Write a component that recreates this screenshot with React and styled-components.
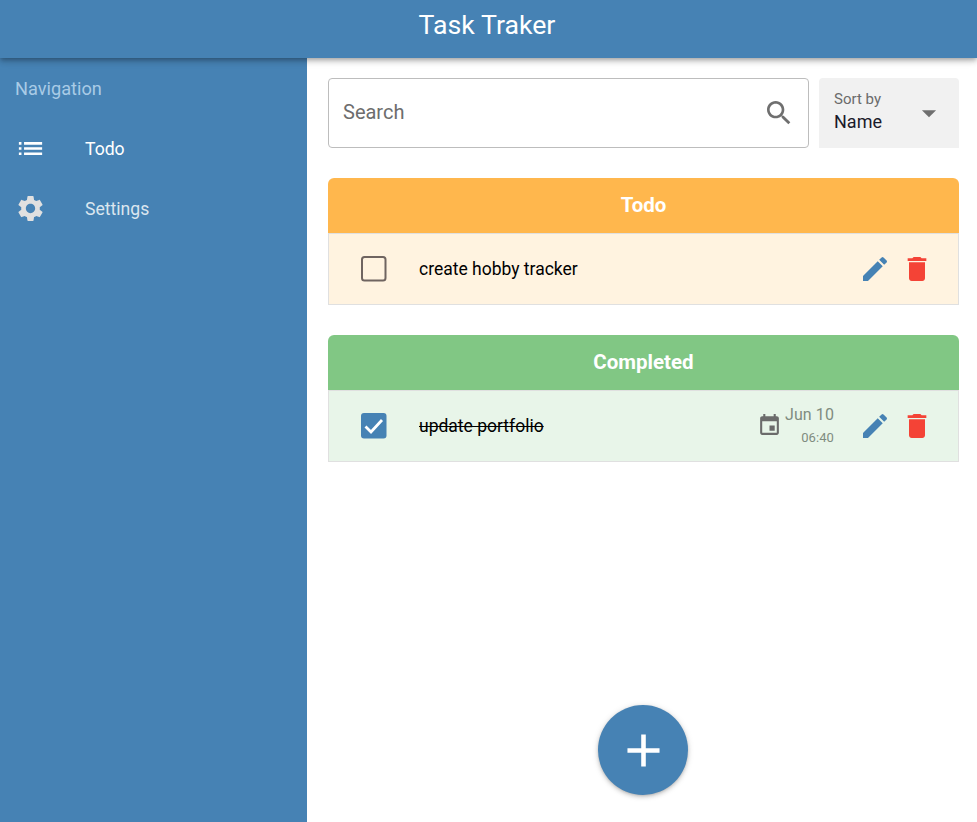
import React from "react";
import styled, { createGlobalStyle } from "styled-components";

const Global = createGlobalStyle`
  html, body { margin: 0; padding: 0; background: #fff; }
  body { font-family: Roboto, "Liberation Sans", sans-serif; }
  * { box-sizing: border-box; }
`;

const Page = styled.div`
  width: 977px;
  height: 822px;
  display: flex;
  flex-direction: column;
  overflow: hidden;
`;
const Header = styled.header`
  height: 58px;
  flex: none;
  background: #4682b4;
  color: #fff;
  font-size: 26.7px;
  line-height: 50px;
  text-align: center;
  padding-right: 3px;
  position: relative;
  z-index: 2;
  box-shadow: 0 2px 4px -1px rgba(0,0,0,.2), 0 4px 5px 0 rgba(0,0,0,.14), 0 1px 10px 0 rgba(0,0,0,.12);
`;
const Body = styled.div`
  flex: 1;
  min-height: 0;
  display: flex;
`;
const Sidebar = styled.nav`
  width: 307px;
  flex: none;
  background: #4682b4;
  padding-top: 20px;
`;
const NavTitle = styled.div`
  font-size: 18.2px;
  line-height: 21px;
  color: #a9cbe6;
  padding-left: 15px;
  margin-bottom: 19px;
`;
const NavItem = styled.div`
  height: 60px;
  display: flex;
  align-items: center;
  padding: 2px 0 0 15px;
  font-size: 17.6px;
  color: ${p => (p.$active ? "#fff" : "#dbe6ef")};
`;
const NavIcon = styled.svg`
  width: 31px;
  height: 31px;
  margin: 0 39px 2px 0;
  fill: ${p => (p.$active ? "#fff" : "#e0e0e0")};
`;
const Main = styled.main`
  flex: 1;
  display: flex;
  flex-direction: column;
  padding: 20px 18px 27px 21px;
`;
const Toolbar = styled.div`
  display: flex;
  gap: 10px;
  height: 70px;
  margin-bottom: 30px;
`;
const SearchBox = styled.div`
  flex: 1;
  display: flex;
  align-items: center;
  justify-content: space-between;
  border: 1px solid #bdbdbd;
  border-radius: 4px;
  padding: 0 14px 2px;
  font-size: 20px;
  color: #6d6d6d;
`;
const SearchIcon = styled.svg`
  width: 32px;
  height: 32px;
  fill: #6f6f6f;
  margin: 2px -1px 0 0;
`;
const Sort = styled.div`
  width: 140px;
  background: #f1f1f1;
  border-radius: 4px 4px 0 0;
  padding: 13px 15px 0;
  position: relative;
`;
const SortLabel = styled.div`
  font-size: 15px;
  line-height: 16px;
  color: #6b6b6b;
`;
const SortValue = styled.div`
  font-size: 18px;
  line-height: 21px;
  margin-top: 4px;
  color: #1a1a2a;
`;
const Caret = styled.svg`
  position: absolute;
  right: 13px;
  top: 18px;
  width: 34px;
  height: 34px;
  fill: #6f6f6f;
`;
const Section = styled.section`
  margin-bottom: 30px;
`;
const SectionHead = styled.div`
  height: 55px;
  border-radius: 6px 6px 0 0;
  background: ${p => p.$color};
  color: #fff;
  font-size: 20.5px;
  font-weight: 700;
  line-height: 54px;
  text-align: center;
`;
const Row = styled.div`
  height: 72px;
  display: flex;
  align-items: center;
  background: ${p => p.$color};
  border: 1px solid #e0e0e0;
  padding: 0 25px 0 32px;
`;
const CheckIcon = styled.svg`
  width: 26px;
  height: 26px;
  flex: none;
  margin-right: 32px;
`;
const TaskText = styled.div`
  flex: 1;
  font-size: 17.5px;
  color: #000;
  text-decoration: ${p => (p.$done ? "line-through" : "none")};
`;
const DateIcon = styled.svg`
  width: 25px;
  height: 25px;
  fill: #6b6b6b;
  margin: 0 3px 2px 0;
`;
const DateBlock = styled.div`
  text-align: right;
  margin-right: 25px;
  color: #7f8c80;
`;
const DateMain = styled.div`
  font-size: 16px;
  line-height: 19px;
  letter-spacing: .1px;
  margin-top: -2px;
`;
const DateTime = styled.div`
  font-size: 13px;
  line-height: 15px;
  margin-top: 6px;
  letter-spacing: .1px;
`;
const ActionIcon = styled.svg`
  width: 32px;
  height: 32px;
  flex: none;
  fill: ${p => p.$color};
  margin-left: ${p => p.$gap || 0}px;
`;
const Fab = styled.button`
  align-self: center;
  margin: auto 1px 0 0;
  width: 90px;
  height: 90px;
  border: none;
  border-radius: 50%;
  padding: 0;
  background: #4682b4;
  display: flex;
  align-items: center;
  justify-content: center;
  box-shadow: 0 1px 3px -1px rgba(0,0,0,.2), 0 2px 4px 0 rgba(0,0,0,.14), 0 1px 7px 0 rgba(0,0,0,.12);
`;
const FabIcon = styled.svg`
  width: 55px;
  height: 55px;
  fill: #fff;
`;

const paths = {
  list: "M3 13h2v-2H3v2zm0 4h2v-2H3v2zm0-8h2V7H3v2zm4 4h14v-2H7v2zm0 4h14v-2H7v2zM7 7v2h14V7H7z",
  settings: "M19.14 12.94c.04-.3.06-.61.06-.94 0-.32-.02-.64-.07-.94l2.03-1.58c.18-.14.23-.41.12-.61l-1.92-3.32c-.12-.22-.37-.29-.59-.22l-2.39.96c-.5-.38-1.03-.7-1.62-.94l-.36-2.54c-.04-.24-.24-.41-.48-.41h-3.84c-.24 0-.43.17-.47.41l-.36 2.54c-.59.24-1.13.57-1.62.94l-2.39-.96c-.22-.08-.47 0-.59.22L2.74 8.87c-.12.21-.08.47.12.61l2.03 1.58c-.05.3-.09.63-.09.94s.02.64.07.94l-2.03 1.58c-.18.14-.23.41-.12.61l1.92 3.32c.12.22.37.29.59.22l2.39-.96c.5.38 1.03.7 1.62.94l.36 2.54c.05.24.24.41.48.41h3.84c.24 0 .44-.17.47-.41l.36-2.54c.59-.24 1.13-.56 1.62-.94l2.39.96c.22.08.47 0 .59-.22l1.92-3.32c.12-.22.07-.47-.12-.61l-2.01-1.58zM12 15.6c-1.98 0-3.6-1.62-3.6-3.6s1.62-3.6 3.6-3.6 3.6 1.62 3.6 3.6-1.62 3.6-3.6 3.6z",
  search: "M15.5 14h-.79l-.28-.27C15.41 12.59 16 11.11 16 9.5 16 5.91 13.09 3 9.5 3S3 5.91 3 9.5 5.91 16 9.5 16c1.61 0 3.09-.59 4.23-1.57l.27.28v.79l5 4.99L20.49 19l-4.99-5zm-6 0C7.01 14 5 11.99 5 9.5S7.01 5 9.5 5 14 7.01 14 9.5 11.99 14 9.5 14z",
  edit: "M3 17.25V21h3.75L17.81 9.94l-3.75-3.75L3 17.25zM20.71 7.04c.39-.39.39-1.02 0-1.41l-2.34-2.34a.9959.9959 0 0 0-1.41 0l-1.83 1.83 3.75 3.75 1.83-1.83z",
  del: "M6 19c0 1.1.9 2 2 2h8c1.1 0 2-.9 2-2V7H6v12zM19 4h-3.5l-1-1h-5l-1 1H5v2h14V4z",
  event: "M17 12h-5v5h5v-5zM16 1v2H8V1H6v2H5c-1.11 0-1.99.9-1.99 2L3 19c0 1.1.89 2 2 2h14c1.1 0 2-.9 2-2V5c0-1.1-.9-2-2-2h-1V1h-2zm3 18H5V8h14v11z",
  caret: "M7 10l5 5 5-5z",
  plus: "M19 13h-6v6h-2v-6H5v-2h6V5h2v6h6v2z",
};

const Actions = () => (
  <>
    <ActionIcon viewBox="0 0 24 24" $color="#4682b4"><path d={paths.edit} /></ActionIcon>
    <ActionIcon viewBox="0 0 24 24" $color="#f44336" $gap={10}><path d={paths.del} /></ActionIcon>
  </>
);

const Unchecked = () => (
  <CheckIcon viewBox="0 0 26 26">
    <rect x="1" y="1" width="23.5" height="23.5" rx="2.5" fill="none" stroke="#6f6460" strokeWidth="2" />
  </CheckIcon>
);
const Checked = () => (
  <CheckIcon viewBox="0 0 26 26">
    <rect x="0" y="0" width="25.5" height="25.5" rx="3" fill="#4682b4" />
    <path d="M4.5 13.5l5.5 5.5L21 7" fill="none" stroke="#fff" strokeWidth="2.8" />
  </CheckIcon>
);

export default function App() {
  return (
    <Page>
      <Global />
      <Header>Task Traker</Header>
      <Body>
        <Sidebar>
          <NavTitle>Navigation</NavTitle>
          <NavItem $active>
            <NavIcon $active viewBox="0 0 24 24"><path d={paths.list} /></NavIcon>
            Todo
          </NavItem>
          <NavItem>
            <NavIcon viewBox="0 0 24 24"><path d={paths.settings} /></NavIcon>
            Settings
          </NavItem>
        </Sidebar>
        <Main>
          <Toolbar>
            <SearchBox>
              Search
              <SearchIcon viewBox="0 0 24 24"><path d={paths.search} /></SearchIcon>
            </SearchBox>
            <Sort>
              <SortLabel>Sort by</SortLabel>
              <SortValue>Name</SortValue>
              <Caret viewBox="0 0 24 24"><path d={paths.caret} /></Caret>
            </Sort>
          </Toolbar>
          <Section>
            <SectionHead $color="#ffb74d">Todo</SectionHead>
            <Row $color="#fff3e0">
              <Unchecked />
              <TaskText>create hobby tracker</TaskText>
              <Actions />
            </Row>
          </Section>
          <Section>
            <SectionHead $color="#81c784">Completed</SectionHead>
            <Row $color="#e8f5e9">
              <Checked />
              <TaskText $done>update portfolio</TaskText>
              <DateIcon viewBox="0 0 24 24"><path d={paths.event} /></DateIcon>
              <DateBlock>
                <DateMain>Jun 10</DateMain>
                <DateTime>06:40</DateTime>
              </DateBlock>
              <Actions />
            </Row>
          </Section>
          <Fab aria-label="Add">
            <FabIcon viewBox="0 0 24 24"><path d={paths.plus} /></FabIcon>
          </Fab>
        </Main>
      </Body>
    </Page>
  );
}
